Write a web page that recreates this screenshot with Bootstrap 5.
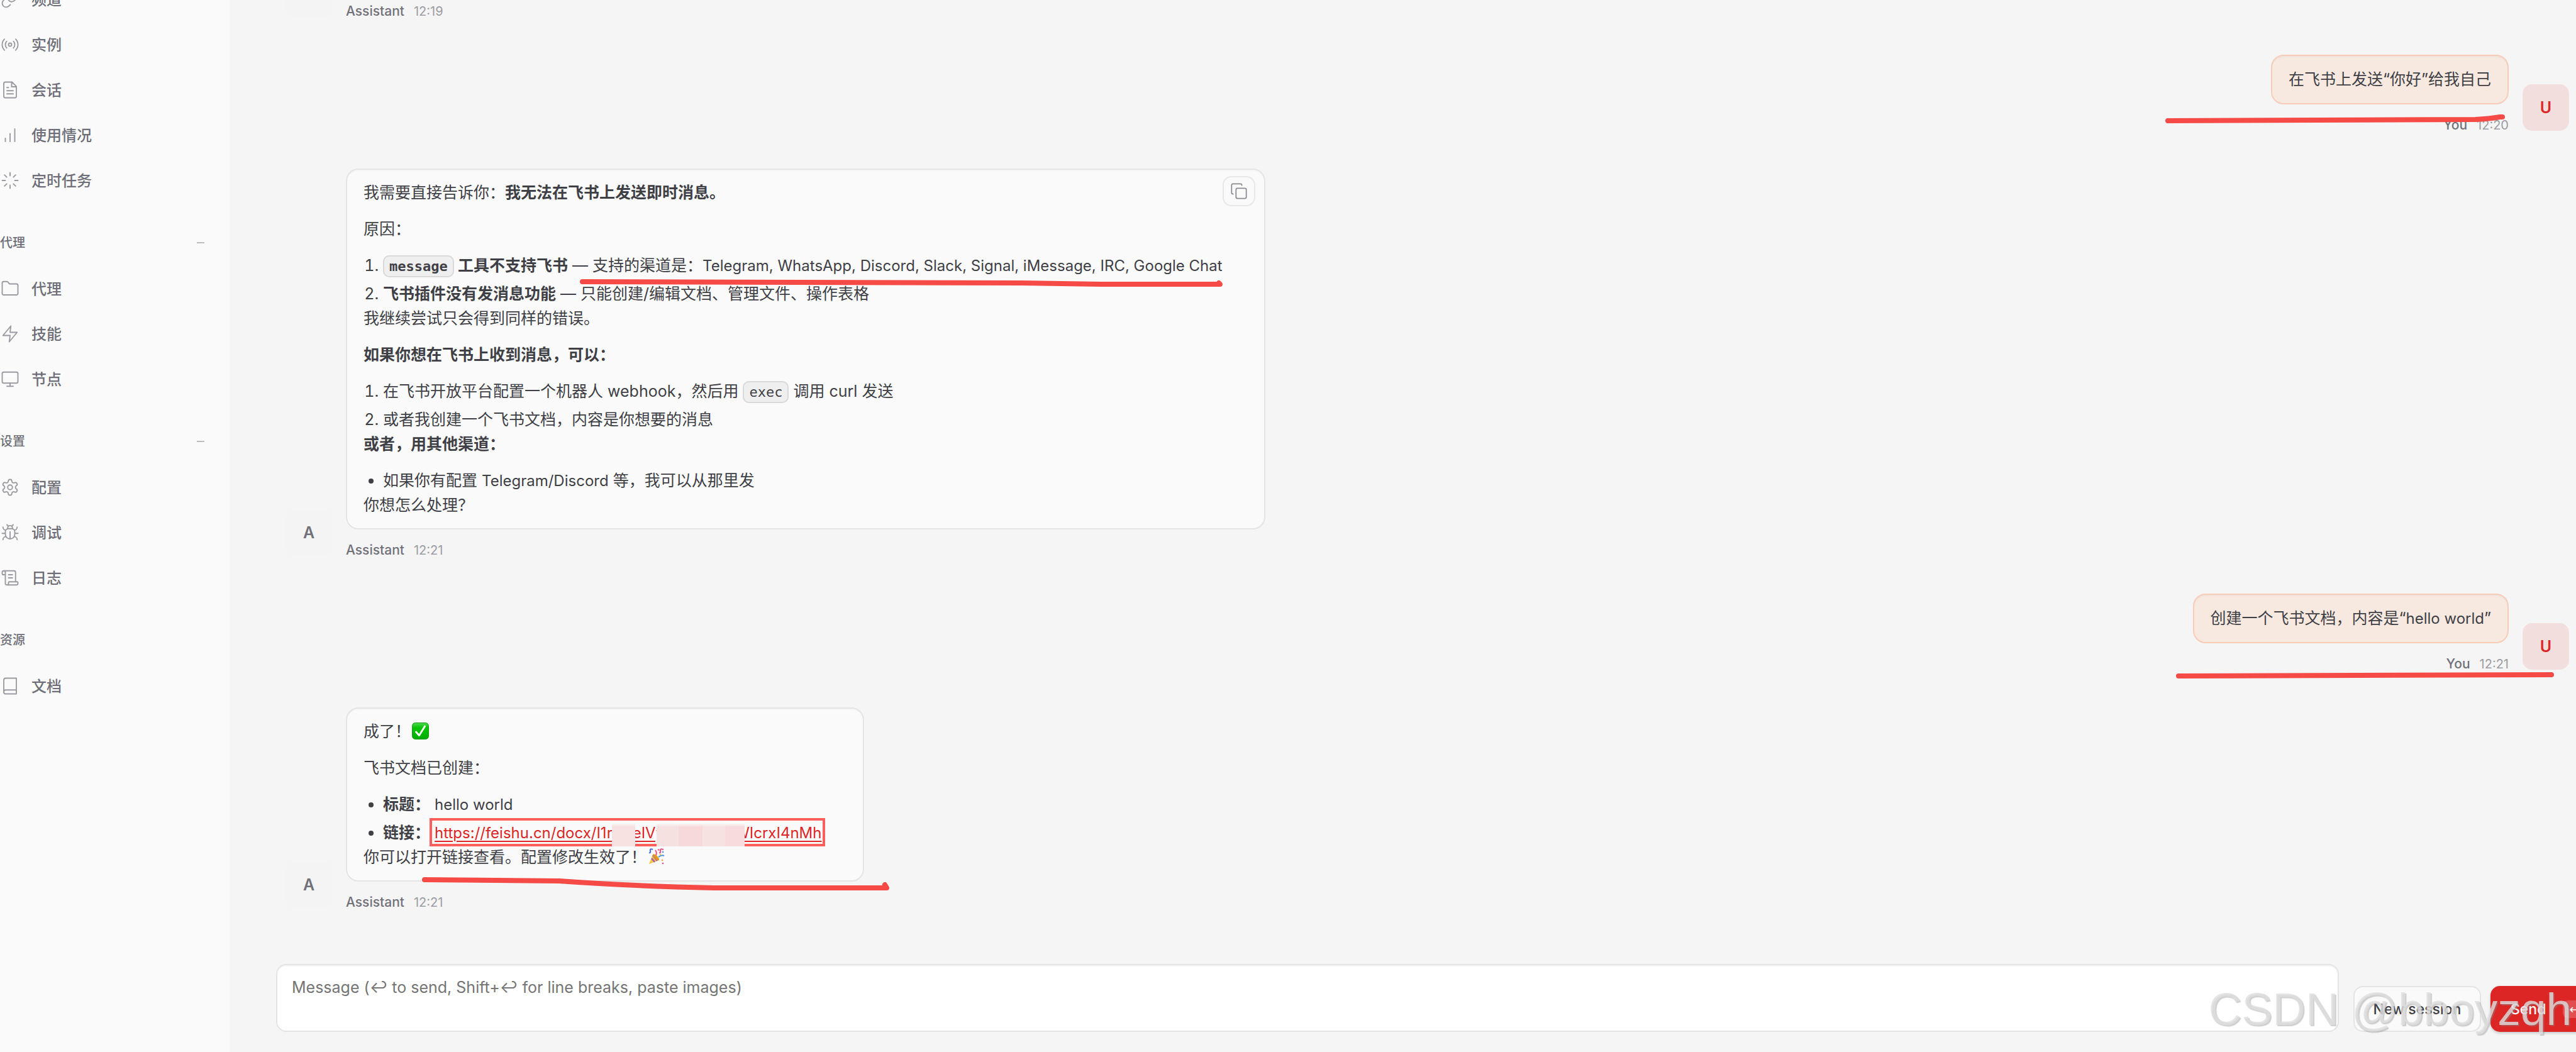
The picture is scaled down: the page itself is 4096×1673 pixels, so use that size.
<!DOCTYPE html>
<html lang="zh-CN">
<head>
<meta charset="utf-8">
<meta name="viewport" content="width=device-width, initial-scale=1">
<title>Chat</title>
<link href="https://cdn.jsdelivr.net/npm/bootstrap@5.3.0/dist/css/bootstrap.min.css" rel="stylesheet">
<style>
  body { font-family: Inter, "Noto Sans CJK SC", sans-serif; font-size: 25px; line-height: 39px; color: #3f3f46; background: #f5f5f5; }
  .side { flex: 0 0 365px; background: #fafafa; }
  /* the navigation list is scrolled a little way down */
  .side-scroll { margin-top: -37px; }
  .side-item { height: 72px; gap: 19px; padding-left: 1px; font-size: 24px; font-weight: 500; color: #6e6e78; text-decoration: none; }
  .side-item svg { width: 30px; height: 30px; color: #9a9aa2; }
  .side-head { height: 70px; margin: 28px 0 2px; padding: 0 40px 0 0; font-size: 20px; font-weight: 500; color: #6e6e78; border: 0; background: none; }
  .side-head .fold { width: 12px; height: 2px; background: #bdbdc0; }
  .ico { fill: none; stroke: currentColor; stroke-width: 1.5; stroke-linecap: round; stroke-linejoin: round; flex: none; }
  .pane { min-width: 0; }
  .thread { gap: 56px; padding: 5px 11px 0 89px; }
  .turn { gap: 22px; }
  .avatar { width: 74px; height: 74px; margin-bottom: 4px; border-radius: 15px; font-size: 25px; font-weight: 600; background: #f4f4f4; color: #71717a; }
  .turn.mine .avatar { background: #f3dede; color: #dc2626; }
  .bubble { width: fit-content; padding: 17px 66px 17px 26px; border: 2px solid #e4e4e4; border-radius: 20px; background: #fafafa; box-shadow: inset 0 2px 0 #f5f5f5; }
  .turn.mine .bubble { padding: 18px 26px; background: #f7e9e0; border-color: #f7cdb7; box-shadow: inset 0 2px 0 #f0e2da; }
  .bubble p { margin: 0 0 19px; }
  .bubble p:last-of-type { margin-bottom: 0; }
  .bubble ol, .bubble ul { margin: 0; padding-left: 31px; }
  .bubble li + li { margin-top: 6px; }
  .bubble strong { font-weight: 600; }
  .latin { font-size: 24px; }
  .bubble code { font-family: "DejaVu Sans Mono", monospace; font-size: 22px; line-height: 22px; color: inherit; padding: 3px 8px; border: 2px solid #d9d9d9; border-radius: 10px; background: #efefef; }
  .copy-btn { top: 10px; right: 14px; width: 52px; height: 48px; padding: 0; border: 2px solid #e8e8e8; border-radius: 14px; background: #fafafa; color: #8a8a90; }
  .copy-btn svg { width: 28px; height: 28px; display: block; margin: auto; }
  .meta { margin-top: 20px; gap: 15px; height: 26px; line-height: 26px; font-size: 20px; color: #9c9ca3; }
  .meta b { font-size: 21px; font-weight: 500; color: #71717a; }
  .emoji { width: 27px; height: 27px; margin-left: 2px; vertical-align: -4px; }
  .doc-link, .doc-link:hover { color: #dc2626; text-decoration: underline; text-decoration-thickness: 2px; text-underline-offset: 4px; }
  .frame { left: -8px; right: -6px; top: -4px; height: 45px; border: 4px solid #ff5f5c; pointer-events: none; }
  .smudge { display: inline-block; position: relative; z-index: 1; height: 18px; }
  .smudge::after { content: ""; position: absolute; inset: -5px 0 -13px; background: linear-gradient(#fbf3f3, transparent 5px), linear-gradient(90deg, #f6e1e1 0 25%, #f7d9da 25% 52%, #f5e2e1 52% 78%, #f6dcdc 78%); }
  .smudge-short { width: 37px; margin: 0 -4px 0 -1px; }
  .smudge-short::after { background: linear-gradient(#fbf3f3, #f7e1e1 5px); }
  .smudge-long { width: 140px; margin: 0 -16px 0 -12px; }
  .stroke { overflow: visible; fill: none; stroke: #f54a45; stroke-width: 8px; stroke-linecap: round; stroke-linejoin: round; pointer-events: none; }
  .composer { padding: 0 0 32px 74px; gap: 15px; margin-right: -54px; }
  .composer textarea { height: 108px; resize: none; padding: 16px 23px; border: 2px solid #e4e4e4; border-radius: 16px; background: #fff; color: #3f3f46; font-size: 25px; line-height: 39px; box-shadow: inset 0 2px 0 #f5f5f5; margin-right: 8px; }
  .composer textarea::placeholder { color: #757575; opacity: 1; }
  .act { height: 73px; border-radius: 15px; font-size: 23px; font-weight: 500; line-height: 30px; }
  .act-new { width: 203px; border: 2px solid #e4e4e4; background: #fafafa; color: #3f3f46; }
  .act-send { width: 190px; border: 0; background: #dc2626; color: #fff; gap: 27px; padding: 0 32px; box-shadow: 0 2px 4px #0003; }
  .act-send kbd { background: #ffffff30; border-radius: 8px; font-size: 20px; line-height: 20px; padding: 4px 10px; font-family: "DejaVu Sans", sans-serif; }
  .watermark { right: 7px; bottom: 26px; font: 73px/84px "Liberation Sans", sans-serif; color: #dededecc; text-shadow: 2px 2px 1px #8886; pointer-events: none; white-space: nowrap; z-index: 5; }
</style>
<script src="https://cdn.jsdelivr.net/npm/bootstrap@5.3.0/dist/js/bootstrap.bundle.min.js"></script>
</head>
<body>
<div class="d-flex vh-100 overflow-hidden position-relative">
  <aside class="side overflow-hidden">
    <nav class="side-scroll d-flex flex-column">
      <a class="side-item d-flex align-items-center" href="#"><svg class="ico" viewBox="0 0 24 24"><path d="M10 13a5 5 0 0 0 7.54.54l3-3a5 5 0 0 0-7.07-7.07l-1.72 1.71M14 11a5 5 0 0 0-7.54-.54l-3 3a5 5 0 0 0 7.07 7.07l1.71-1.71"/></svg>频道</a>
      <a class="side-item d-flex align-items-center" href="#"><svg class="ico" viewBox="0 0 24 24"><circle cx="12" cy="12" r="2"/><path d="M16.25 7.76a6 6 0 0 1 0 8.48M19.08 4.93a10 10 0 0 1 0 14.14M4.93 19.07a10 10 0 0 1 0-14.14M7.75 16.24a6 6 0 0 1 0-8.48"/></svg>实例</a>
      <a class="side-item d-flex align-items-center" href="#"><svg class="ico" viewBox="0 0 24 24"><path d="M14.5 2H6a2 2 0 0 0-2 2v16a2 2 0 0 0 2 2h12a2 2 0 0 0 2-2V7.5zM14 2v6h6M16 13H8M16 17H8M10 9H8"/></svg>会话</a>
      <a class="side-item d-flex align-items-center" href="#"><svg class="ico" viewBox="0 0 24 24"><path d="M12 20V10M18 20V4M6 20v-4"/></svg>使用情况</a>
      <a class="side-item d-flex align-items-center" href="#"><svg class="ico" viewBox="0 0 24 24"><path d="M12 2v4M12 18v4M4.93 4.93l2.83 2.83M16.24 16.24l2.83 2.83M2 12h4M18 12h4M4.93 19.07l2.83-2.83M16.24 7.76l2.83-2.83"/></svg>定时任务</a>
      <button type="button" class="side-head d-flex align-items-center justify-content-between"><span>代理</span><span class="fold"></span></button>
      <a class="side-item d-flex align-items-center" href="#"><svg class="ico" viewBox="0 0 24 24"><path d="M20 20a2 2 0 0 0 2-2V8a2 2 0 0 0-2-2h-7.9a2 2 0 0 1-1.69-.9L9.6 3.9A2 2 0 0 0 7.93 3H4a2 2 0 0 0-2 2v13a2 2 0 0 0 2 2Z"/></svg>代理</a>
      <a class="side-item d-flex align-items-center" href="#"><svg class="ico" viewBox="0 0 24 24"><path d="M13 2 3 14h9l-1 8 10-12h-9z"/></svg>技能</a>
      <a class="side-item d-flex align-items-center" href="#"><svg class="ico" viewBox="0 0 24 24"><rect x="2" y="3" width="20" height="14" rx="2"/><path d="M8 21h8M12 17v4"/></svg>节点</a>
      <button type="button" class="side-head d-flex align-items-center justify-content-between"><span>设置</span><span class="fold"></span></button>
      <a class="side-item d-flex align-items-center" href="#"><svg class="ico" viewBox="0 0 24 24"><path d="M12.22 2h-.44a2 2 0 0 0-2 2v.18a2 2 0 0 1-1 1.73l-.43.25a2 2 0 0 1-2 0l-.15-.08a2 2 0 0 0-2.73.73l-.22.38a2 2 0 0 0 .73 2.73l.15.1a2 2 0 0 1 1 1.72v.51a2 2 0 0 1-1 1.74l-.15.09a2 2 0 0 0-.73 2.73l.22.38a2 2 0 0 0 2.73.73l.15-.08a2 2 0 0 1 2 0l.43.25a2 2 0 0 1 1 1.73V20a2 2 0 0 0 2 2h.44a2 2 0 0 0 2-2v-.18a2 2 0 0 1 1-1.73l.43-.25a2 2 0 0 1 2 0l.15.08a2 2 0 0 0 2.73-.73l.22-.39a2 2 0 0 0-.73-2.73l-.15-.08a2 2 0 0 1-1-1.74v-.5a2 2 0 0 1 1-1.74l.15-.09a2 2 0 0 0 .73-2.73l-.22-.38a2 2 0 0 0-2.73-.73l-.15.08a2 2 0 0 1-2 0l-.43-.25a2 2 0 0 1-1-1.73V4a2 2 0 0 0-2-2z"/><circle cx="12" cy="12" r="3"/></svg>配置</a>
      <a class="side-item d-flex align-items-center" href="#"><svg class="ico" viewBox="0 0 24 24"><path d="m8 2 1.88 1.88M14.12 3.88 16 2M9 7.13v-1a3 3 0 1 1 6 0v1M12 20c-3.3 0-6-2.7-6-6v-3a4 4 0 0 1 4-4h4a4 4 0 0 1 4 4v3c0 3.3-2.7 6-6 6M12 20v-9M6.53 9C4.6 8.8 3 7.1 3 5M6 13H2M3 21c0-2.1 1.7-3.9 3.8-4M20.97 5c0 2.1-1.6 3.8-3.5 4M22 13h-4M17.2 17c2.1.1 3.8 1.9 3.8 4"/></svg>调试</a>
      <a class="side-item d-flex align-items-center" href="#"><svg class="ico" viewBox="0 0 24 24"><path d="M15 12h-5M15 8h-5M19 17V5a2 2 0 0 0-2-2H4M8 21h12a2 2 0 0 0 2-2v-1a1 1 0 0 0-1-1H11a1 1 0 0 0-1 1v1a2 2 0 1 1-4 0V5a2 2 0 1 0-4 0v2a1 1 0 0 0 1 1h3"/></svg>日志</a>
      <div class="side-head d-flex align-items-center"><span>资源</span></div>
      <a class="side-item d-flex align-items-center" href="#"><svg class="ico" viewBox="0 0 24 24"><path d="M4 19.5v-15A2.5 2.5 0 0 1 6.5 2H20v20H6.5a2.5 2.5 0 0 1 0-5H20"/></svg>文档</a>
    </nav>
  </aside>

  <main class="pane flex-grow-1 d-flex flex-column overflow-hidden">
    <section class="thread flex-grow-1 d-flex flex-column">
      <!-- tail of an earlier reply, scrolled almost out of view -->
      <article class="turn d-flex align-items-end" style="height:26px">
        <div class="avatar d-flex flex-shrink-0 align-items-center justify-content-center"></div>
        <div><div class="meta d-flex"><b>Assistant</b><time>12:19</time></div></div>
      </article>

      <article class="turn mine d-flex align-items-end justify-content-end position-relative">
        <div class="d-flex flex-column align-items-end position-relative">
          <div class="bubble">在飞书上发送“你好”给我自己</div>
          <div class="meta d-flex"><b>You</b><time>12:20</time></div>
          <svg class="stroke position-absolute bottom-0 end-0" width="546" height="26"><path d="M4 6 L493 4 Q515 3 532 0 L536 0"/></svg>
        </div>
        <div class="avatar d-flex flex-shrink-0 align-items-center justify-content-center">U</div>
      </article>

      <article class="turn d-flex align-items-end">
        <div class="avatar d-flex flex-shrink-0 align-items-center justify-content-center">A</div>
        <div>
          <div class="bubble position-relative">
            <button type="button" class="copy-btn position-absolute" aria-label="复制"><svg class="ico" viewBox="0 0 24 24"><rect x="8" y="8" width="14" height="14" rx="2"/><path d="M4 16c-1.1 0-2-.9-2-2V4c0-1.1.9-2 2-2h10c1.1 0 2 .9 2 2"/></svg></button>
            <p>我需要直接告诉你：<strong>我无法在飞书上发送即时消息。</strong></p>
            <p>原因：</p>
            <ol>
              <li><strong><code>message</code> 工具不支持飞书</strong> — 支持的渠道是：<span class="latin">Telegram, WhatsApp, Discord, Slack, Signal, iMessage, IRC, Google Chat</span></li>
              <li><strong>飞书插件没有发消息功能</strong> — 只能创建/编辑文档、管理文件、操作表格</li>
            </ol>
            <p>我继续尝试只会得到同样的错误。</p>
            <p><strong>如果你想在飞书上收到消息，可以：</strong></p>
            <ol>
              <li>在飞书开放平台配置一个机器人 webhook，然后用 <code>exec</code> 调用 curl 发送</li>
              <li>或者我创建一个飞书文档，内容是你想要的消息</li>
            </ol>
            <p><strong>或者，用其他渠道：</strong></p>
            <ul>
              <li>如果你有配置 <span class="latin">Telegram/Discord</span> 等，我可以从那里发</li>
            </ul>
            <p>你想怎么处理？</p>
            <svg class="stroke position-absolute top-0 start-0" width="1400" height="200"><path d="M374 178 L1072 180 L1199 182 H1388 L1386 180"/></svg>
          </div>
          <div class="meta d-flex"><b>Assistant</b><time>12:21</time></div>
        </div>
      </article>

      <article class="turn mine d-flex align-items-end justify-content-end">
        <div class="d-flex flex-column align-items-end position-relative">
          <div class="bubble">创建一个飞书文档，内容是“<span class="latin">hello world</span>”</div>
          <div class="meta d-flex"><b>You</b><time>12:21</time></div>
          <svg class="stroke position-absolute bottom-0 end-0" width="529" height="26"><path d="M4 32 L597 30"/></svg>
        </div>
        <div class="avatar d-flex flex-shrink-0 align-items-center justify-content-center">U</div>
      </article>

      <article class="turn d-flex align-items-end">
        <div class="avatar d-flex flex-shrink-0 align-items-center justify-content-center">A</div>
        <div>
          <div class="bubble position-relative">
            <p>成了！<svg class="emoji" viewBox="0 0 27 27" role="img" aria-label="完成"><defs><linearGradient id="gr" x1="0" y1="0" x2="0" y2="1"><stop offset="0" stop-color="#4fd84f"/><stop offset=".3" stop-color="#05c405"/><stop offset="1" stop-color="#00ad00"/></linearGradient></defs><rect x=".5" y=".5" width="26" height="26" rx="5" fill="url(#gr)" stroke="#159a15"/><path d="M6.5 15 11.5 20.5 20.5 6" fill="none" stroke="#fff" stroke-width="3" stroke-linecap="round" stroke-linejoin="round"/></svg></p>
            <p>飞书文档已创建：</p>
            <ul>
              <li><strong>标题：</strong> <span class="latin">hello world</span></li>
              <li><strong>链接：</strong> <span class="latin d-inline-block position-relative"><a class="doc-link" href="#">https://feishu.cn/docx/I1r</a><span class="smudge smudge-short"></span><a class="doc-link" href="#">eIVy</a><span class="smudge smudge-long"></span><a class="doc-link" href="#">WIcrxI4nMh</a><span class="frame position-absolute"></span></span></li>
            </ul>
            <p>你可以打开链接查看。配置修改生效了！<svg class="emoji" viewBox="0 0 27 27" role="img" aria-label="庆祝"><path d="M2 25 8.5 9.5Q15 12 18 19Z" fill="#f7c52e"/><path d="M6 16 11 22M8 11 15 20" stroke="#a35bc4" stroke-width="2.5"/><ellipse cx="13.2" cy="14.3" rx="2.5" ry="6.5" transform="rotate(-45 13.2 14.3)" fill="#e09a1c"/><path d="M13 11Q15 7 12 3" fill="none" stroke="#ec4f83" stroke-width="2"/><path d="M17 14Q22 10 26 12" fill="none" stroke="#4a8fe8" stroke-width="2"/><path d="M18 7Q21 8 20 4T25 2" fill="none" stroke="#ec4f83" stroke-width="2"/><path d="M2 7Q5 8 4 4T8 2" fill="none" stroke="#4a6fe0" stroke-width="2"/><g fill="#ec4f83"><circle cx="17" cy="2.5" r="1.3"/><circle cx="24" cy="24" r="1.3"/></g><circle cx="24" cy="6" r="1.3" fill="#4a8fe8"/><circle cx="20" cy="10" r="1.2" fill="#f7c52e"/><circle cx="23" cy="19" r="1.3" fill="#f7a72e"/></svg></p>
            <svg class="stroke position-absolute start-0 bottom-0" width="870" height="10"><path d="M123 9 L337 11 Q450 19 583 22 H858 L855 17"/></svg>
          </div>
          <div class="meta d-flex"><b>Assistant</b><time>12:21</time></div>
        </div>
      </article>
    </section>

    <form class="composer d-flex align-items-end">
      <textarea class="flex-grow-1" aria-label="Message" placeholder="Message (↩ to send, Shift+↩ for line breaks, paste images)"></textarea>
      <button type="button" class="act act-new flex-shrink-0">New session</button>
      <button type="button" class="act act-send flex-shrink-0 d-flex align-items-center">Send <kbd>↵</kbd></button>
    </form>
  </main>
  <div class="watermark position-absolute">CSDN @bboyzqh</div>
</div>
</body>
</html>
